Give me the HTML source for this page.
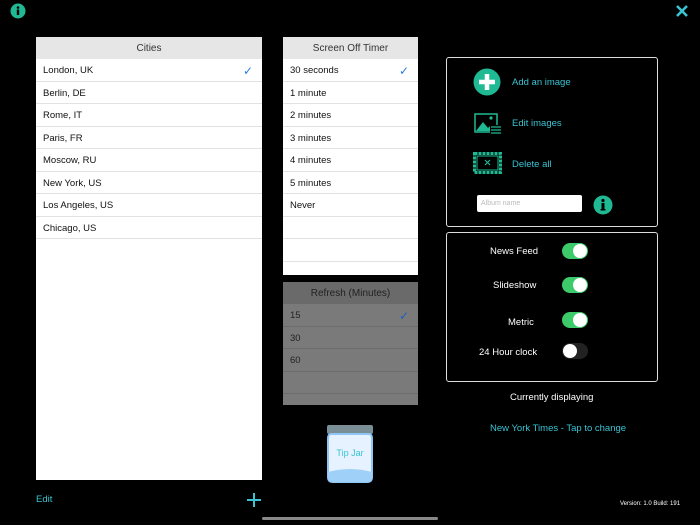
<!DOCTYPE html><html><head><style>
body{margin:0;width:700px;height:525px;background:#000;font-family:"Liberation Sans",sans-serif;position:relative;overflow:hidden}
.a{position:absolute}
.tbl{position:absolute;background:#fff}
.hd{height:22px;background:#e6e6e6;text-align:center;font-size:10px;line-height:23px;color:#333}
.r{height:22.5px;line-height:24px;font-size:9.5px;color:#111;padding-left:7px;border-bottom:1px solid #e2e2e2;position:relative;box-sizing:border-box}
.ck{position:absolute;right:9px;top:0;color:#2a7be4;font-size:12px}
.g .hd{background:#6a6a6a;color:#222}
.g{background:#7a7a7a}
.g .r{color:#222;border-bottom:1px solid #6c6c6c}
.g .ck{color:#1f5fc0}
.pn{position:absolute;border:1.5px solid #ddd;border-radius:3px;box-sizing:border-box}
.t{color:#3ac3d2;font-size:9.5px}
.w{color:#fff;font-size:9.5px}
.tg{position:absolute;width:26px;height:16px;border-radius:8px;background:#3dca6a}
.tg::after{content:"";position:absolute;top:1px;right:1px;width:14px;height:14px;border-radius:7px;background:#fff}
.off{background:#222}.off::after{left:1px;right:auto}
</style></head><body>
<svg class="a" style="left:10px;top:3px" width="16" height="16"><circle cx="8" cy="8" r="7.5" fill="#1fba94"/><circle cx="8" cy="4.5" r="1.3" fill="#000"/><rect x="6.8" y="6.5" width="2.4" height="5.5" fill="#000"/></svg>
<svg class="a" style="left:675px;top:4px" width="14" height="14"><path d="M2 2L12 12M12 2L2 12" stroke="#3ac3d2" stroke-width="2.6"/></svg>

<div class="tbl" style="left:36px;top:37px;width:226px;height:443px">
<div class="hd">Cities</div>
<div class="r">London, UK<span class="ck">✓</span></div><div class="r">Berlin, DE</div><div class="r">Rome, IT</div><div class="r">Paris, FR</div><div class="r">Moscow, RU</div><div class="r">New York, US</div><div class="r">Los Angeles, US</div><div class="r">Chicago, US</div>
</div>
<div class="tbl" style="left:283px;top:37px;width:135px;height:238px">
<div class="hd">Screen Off Timer</div>
<div class="r">30 seconds<span class="ck">✓</span></div><div class="r">1 minute</div><div class="r">2 minutes</div><div class="r">3 minutes</div><div class="r">4 minutes</div><div class="r">5 minutes</div><div class="r">Never</div><div class="r"></div><div class="r"></div>
</div>
<div class="tbl g" style="left:283px;top:282px;width:135px;height:123px">
<div class="hd">Refresh (Minutes)</div>
<div class="r">15<span class="ck">✓</span></div><div class="r">30</div><div class="r">60</div><div class="r"></div>
</div>
<svg class="a" style="left:325px;top:424px" width="50" height="62"><rect x="2" y="1" width="46" height="9" rx="2" fill="#7a8e96"/><path d="M6 10h38q3 0 3 5v38q0 5-5 5h-34q-5 0-5-5v-38q0-5 3-5z" fill="#e6f2ff" stroke="#8ec6f6" stroke-width="2"/><path d="M3 48q22-6 44 0v5q0 5-5 5h-34q-5 0-5-5z" fill="#9fd0f8"/><text x="25" y="32" font-size="9" fill="#3ac3d2" text-anchor="middle" font-family="Liberation Sans">Tip Jar</text></svg>
<div class="a t" style="left:36px;top:494px">Edit</div>
<svg class="a" style="left:247px;top:493px" width="14" height="14"><path d="M7 0v14M0 7h14" stroke="#3ac3d2" stroke-width="2"/></svg>

<div class="pn" style="left:446px;top:57px;width:212px;height:170px"></div>
<svg class="a" style="left:473px;top:68px" width="28" height="28"><circle cx="14" cy="14" r="13.5" fill="#1fba94"/><path d="M14 6v16M6 14h16" stroke="#fff" stroke-width="4.5"/></svg>
<div class="a t" style="left:512px;top:77px">Add an image</div>
<svg class="a" style="left:474px;top:113px" width="28" height="22"><rect x="1" y="1" width="22" height="18" fill="none" stroke="#1fba94" stroke-width="1.5"/><path d="M2 18l7-9 5 6 3-3 5 6z" fill="#1fba94"/><circle cx="17" cy="5" r="1.6" fill="#1fba94"/><rect x="16" y="12" width="12" height="9" fill="#000"/><path d="M17 14h10M17 17h10M17 20h10" stroke="#1fba94" stroke-width="1.3"/></svg>
<div class="a t" style="left:512px;top:118px">Edit images</div>
<svg class="a" style="left:473px;top:152px" width="29" height="22"><rect x="1.5" y="1.5" width="26" height="19" fill="none" stroke="#1fba94" stroke-width="3" stroke-dasharray="3 1"/><rect x="4" y="4" width="21" height="14" fill="none" stroke="#1fba94" stroke-width="1"/><path d="M12 8l5 5M17 8l-5 5" stroke="#1fba94" stroke-width="1.2"/></svg>
<div class="a t" style="left:512px;top:159px">Delete all</div>
<div class="a" style="left:477px;top:195px;width:105px;height:17px;background:#fff;border-radius:2px;font-size:7px;color:#bbb;line-height:17px;padding-left:4px;box-sizing:border-box">Album name</div>
<svg class="a" style="left:593px;top:195px" width="20" height="20"><circle cx="10" cy="10" r="9.5" fill="#1fba94"/><circle cx="10" cy="5.5" r="1.6" fill="#000"/><rect x="8.5" y="8" width="3" height="7" fill="#000"/><rect x="7.5" y="14" width="5" height="1.5" fill="#000"/></svg>

<div class="pn" style="left:446px;top:232px;width:212px;height:150px"></div>
<div class="a w" style="left:490px;top:246px">News Feed</div><div class="tg" style="left:562px;top:243px"></div>
<div class="a w" style="left:493px;top:280px">Slideshow</div><div class="tg" style="left:562px;top:277px"></div>
<div class="a w" style="left:508px;top:317px">Metric</div><div class="tg" style="left:562px;top:312px"></div>
<div class="a w" style="left:479px;top:347px">24 Hour clock</div><div class="tg off" style="left:562px;top:343px"></div>
<div class="a w" style="left:510px;top:392px">Currently displaying</div>
<div class="a t" style="left:490px;top:423px">New York Times - Tap to change</div>
<div class="a" style="left:620px;top:501px;color:#fff;font-size:6px">Version: 1.0 Build: 191</div>
<div class="a" style="left:262px;top:517px;width:176px;height:3px;border-radius:2px;background:#888"></div>
</body></html>
